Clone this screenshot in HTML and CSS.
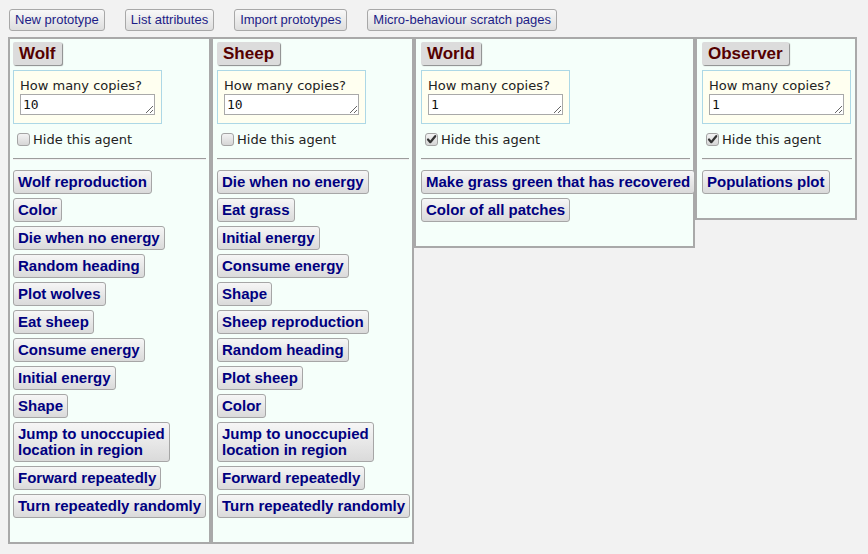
FILE: index.html
```html
<!DOCTYPE html>
<html>
<head>
<meta charset="utf-8">
<link rel="stylesheet" href="styles.css">
</head>
<body>
<div class="toolbar">
  <button class="tool">New prototype</button>
  <button class="tool">List attributes</button>
  <button class="tool">Import prototypes</button>
  <button class="tool">Micro-behaviour scratch pages</button>
</div>
<div class="panels">
  <div class="panel wolf">
    <button class="agent-name">Wolf</button>
    <div class="copies">
      <div class="copies-label">How many copies?</div>
      <textarea class="copies-input" rows="1">10</textarea>
    </div>
    <div class="hide-row"><span class="check"></span><span class="hide-label">Hide this agent</span></div>
    <hr class="divider">
    <div class="behaviours">
      <button class="mb">Wolf reproduction</button>
      <button class="mb">Color</button>
      <button class="mb">Die when no energy</button>
      <button class="mb">Random heading</button>
      <button class="mb">Plot wolves</button>
      <button class="mb">Eat sheep</button>
      <button class="mb">Consume energy</button>
      <button class="mb">Initial energy</button>
      <button class="mb">Shape</button>
      <button class="mb">Jump to unoccupied<br>location in region</button>
      <button class="mb">Forward repeatedly</button>
      <button class="mb">Turn repeatedly randomly</button>
    </div>
  </div>
  <div class="panel sheep">
    <button class="agent-name">Sheep</button>
    <div class="copies">
      <div class="copies-label">How many copies?</div>
      <textarea class="copies-input" rows="1">10</textarea>
    </div>
    <div class="hide-row"><span class="check"></span><span class="hide-label">Hide this agent</span></div>
    <hr class="divider">
    <div class="behaviours">
      <button class="mb">Die when no energy</button>
      <button class="mb">Eat grass</button>
      <button class="mb">Initial energy</button>
      <button class="mb">Consume energy</button>
      <button class="mb">Shape</button>
      <button class="mb">Sheep reproduction</button>
      <button class="mb">Random heading</button>
      <button class="mb">Plot sheep</button>
      <button class="mb">Color</button>
      <button class="mb">Jump to unoccupied<br>location in region</button>
      <button class="mb">Forward repeatedly</button>
      <button class="mb">Turn repeatedly randomly</button>
    </div>
  </div>
  <div class="panel world">
    <button class="agent-name">World</button>
    <div class="copies">
      <div class="copies-label">How many copies?</div>
      <textarea class="copies-input" rows="1">1</textarea>
    </div>
    <div class="hide-row"><span class="check checked"><svg viewBox="0 0 13 13" width="13" height="13"><path d="M3 6.5 L5.3 9.2 L10.2 3.2" fill="none" stroke="#333" stroke-width="2.2" stroke-linecap="round" stroke-linejoin="round"/></svg></span><span class="hide-label">Hide this agent</span></div>
    <hr class="divider">
    <div class="behaviours">
      <button class="mb">Make grass green that has recovered</button>
      <button class="mb">Color of all patches</button>
    </div>
  </div>
  <div class="panel observer">
    <button class="agent-name">Observer</button>
    <div class="copies">
      <div class="copies-label">How many copies?</div>
      <textarea class="copies-input" rows="1">1</textarea>
    </div>
    <div class="hide-row"><span class="check checked"><svg viewBox="0 0 13 13" width="13" height="13"><path d="M3 6.5 L5.3 9.2 L10.2 3.2" fill="none" stroke="#333" stroke-width="2.2" stroke-linecap="round" stroke-linejoin="round"/></svg></span><span class="hide-label">Hide this agent</span></div>
    <hr class="divider">
    <div class="behaviours">
      <button class="mb">Populations plot</button>
    </div>
  </div>
</div>
</body>
</html>
```
FILE: styles.css
```css
* { box-sizing: border-box; }
html, body { margin: 0; padding: 0; }
body {
  background: #f2f2f2;
  padding: 8px;
  font-family: "Liberation Sans", Arial, sans-serif;
}
.toolbar {
  display: flex;
  align-items: flex-start;
  gap: 20px;
  padding: 1px 0 0 1px;
  height: 29px;
}
.tool {
  font-family: "Liberation Sans", Arial, sans-serif;
  font-size: 13px;
  color: #1c1c86;
  height: 22px;
  line-height: 18px;
  padding: 1px 5px;
  border: 1px solid #a8a8a8;
  border-radius: 3px;
  background: linear-gradient(#f8f8f8, #dedede);
  margin: 0;
  white-space: nowrap;
}
.panels {
  display: flex;
  align-items: flex-start;
}
.panel {
  background: #f5fffa;
  border: 2px solid #a9a9a9;
  padding: 3px 3px 24px 3px;
  display: flex;
  flex-direction: column;
  align-items: flex-start;
}
.wolf { width: 203px; }
.sheep { width: 203px; padding-left: 4px; }
.world { width: 281px; padding-left: 5px; }
.observer { width: 162px; padding-left: 5px; }
.agent-name {
  font-family: "Liberation Sans", Arial, sans-serif;
  font-weight: bold;
  font-size: 17px;
  color: #550000;
  background: #dcdcdc;
  border: none;
  border-radius: 2px;
  box-shadow: 1px 1px 1px #8a8a8a;
  height: 23px;
  line-height: 23px;
  padding: 0 6px;
  margin: 0 0 5px 0;
}
.copies {
  background: #fffff0;
  border: 1px solid #add8e6;
  padding: 6px 6px 8px 6px;
  margin-bottom: 4px;
}
.copies-label {
  font-family: "DejaVu Sans", Verdana, sans-serif;
  font-size: 13px;
  line-height: 17px;
  color: #222;
}
.copies-input {
  display: block;
  width: 135px;
  height: 21px;
  margin: 0;
  padding: 1px 2px;
  border: 1px solid #a9a9a9;
  background: #fff;
  font-family: "DejaVu Sans Mono", "Liberation Mono", monospace;
  font-size: 13px;
  line-height: 17px;
  color: #111;
  overflow: hidden;
  resize: both;
}
.hide-row {
  display: flex;
  align-items: center;
  height: 21px;
  padding-left: 4px;
  padding-top: 2px;
}
.check {
  width: 13px;
  height: 13px;
  border: 1px solid #a4a4a4;
  border-radius: 3px;
  background: linear-gradient(#f3f3f3, #d6d6d6);
  margin-right: 3px;
  position: relative;
  display: inline-block;
}
.check svg {
  position: absolute;
  left: -1px;
  top: -1px;
}
.hide-label {
  font-family: "DejaVu Sans", Verdana, sans-serif;
  font-size: 13px;
  color: #222;
}
.divider {
  align-self: stretch;
  margin: 9px 0 10px 0;
  border: none;
  border-top: 1px solid #9c9c9c;
  border-bottom: 1px solid #f0f0f0;
  height: 0;
}
.behaviours {
  display: flex;
  flex-direction: column;
  align-items: flex-start;
  gap: 4px;
}
.mb {
  font-family: "Liberation Sans", Arial, sans-serif;
  font-weight: bold;
  font-size: 15px;
  line-height: 16px;
  color: #000080;
  text-align: left;
  padding: 3px 4px;
  border: 1px solid #a6a6a6;
  border-radius: 3px;
  background: linear-gradient(#f6f6f6, #dadada);
  margin: 0;
  white-space: nowrap;
}
```
